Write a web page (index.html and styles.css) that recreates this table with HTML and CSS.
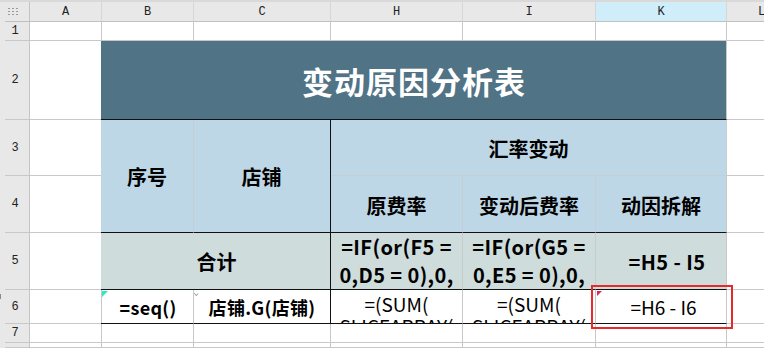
FILE: index.html
```html
<!DOCTYPE html>
<html lang="zh">
<head>
<meta charset="utf-8">
<title>变动原因分析表</title>
<link rel="stylesheet" href="styles.css">
</head>
<body>
<div class="sheet">
  <!-- top strip -->
  <div class="topstrip"></div>
  <div class="leftstrip"><span class="grip"></span></div>

  <!-- column headers -->
  <div class="corner"><span class="dots"></span></div>
  <div class="colh">A</div>
  <div class="colh">B</div>
  <div class="colh">C</div>
  <div class="colh">H</div>
  <div class="colh">I</div>
  <div class="colh sel">K</div>
  <div class="colh last">L</div>

  <!-- row 1 -->
  <div class="rowh">1</div>
  <div class="c"></div><div class="c"></div><div class="c"></div><div class="c"></div><div class="c"></div><div class="c"></div><div class="c"></div>

  <!-- row 2 -->
  <div class="rowh">2</div>
  <div class="c"></div>
  <div class="c title">变动原因分析表</div>
  <div class="c"></div>

  <!-- rows 3-4 -->
  <div class="rowh r3">3</div>
  <div class="rowh r4">4</div>
  <div class="c a34"></div>
  <div class="c hd seq">序号</div>
  <div class="c hd shop">店铺</div>
  <div class="c hd fx">汇率变动</div>
  <div class="c l34"></div>
  <div class="c hd sub r4c">原费率</div>
  <div class="c hd sub r4c">变动后费率</div>
  <div class="c hd sub last4 r4c">动因拆解</div>

  <!-- row 5 -->
  <div class="rowh">5</div>
  <div class="c"></div>
  <div class="c tot sum">合计</div>
  <div class="c tot wrap">=IF(or(F5 =<br>0,D5 = 0),0,</div>
  <div class="c tot wrap">=IF(or(G5 =<br>0,E5 = 0),0,</div>
  <div class="c tot k5">=H5 - I5</div>
  <div class="c"></div>

  <!-- row 6 -->
  <div class="rowh">6</div>
  <div class="c"></div>
  <div class="c d6 b6"><span class="tri cyan"></span>=seq()</div>
  <div class="c d6 c6"><span class="tick"></span>店铺.G(店铺)</div>
  <div class="c d6 f6 gl">=(SUM(<br>SLICEARRAY(</div>
  <div class="c d6 f6 gl">=(SUM(<br>SLICEARRAY(</div>
  <div class="c d6 k6"><span class="tri red"></span>=H6 - I6<span class="selbox"></span></div>
  <div class="c"></div>

  <!-- row 7 -->
  <div class="rowh">7</div>
  <div class="c"></div><div class="c"></div><div class="c"></div><div class="c"></div><div class="c"></div><div class="c"></div><div class="c"></div>

  <!-- row 8 -->
  <div class="rowh"></div>
  <div class="c"></div><div class="c"></div><div class="c"></div><div class="c"></div><div class="c"></div><div class="c"></div><div class="c"></div>
</div>
</body>
</html>
```

FILE: styles.css
```css
html, body {
  margin: 0;
  padding: 0;
  background: #ffffff;
}

body {
  width: 764px;
  height: 348px;
  overflow: hidden;
  font-family: "Noto Sans CJK SC", "Noto Sans", sans-serif;
  color: #000;
}

.sheet {
  display: grid;
  grid-template-columns: 5px 25px 72px 92px 137px 132px 133px 131px 1fr;
  grid-template-rows: 2px 20px 19px 79px 56px 57px 57px 34px 19px 1fr;
  height: 348px;
}

.topstrip {
  grid-column: 1 / -1;
  grid-row: 1;
  background: #d9d9d9;
}

.leftstrip {
  grid-column: 1;
  grid-row: 2 / -1;
  background: #e8e8e8;
  position: relative;
}

.grip {
  position: absolute;
  left: 0;
  top: 292px;
  width: 1px;
  height: 5px;
  background: #8a8a8a;
}

.corner {
  grid-column: 2;
  background: #e8e8e8;
  border-right: 1px solid #c4c4c4;
  border-bottom: 1px solid #c0c0c0;
  box-sizing: border-box;
  display: flex;
  align-items: center;
  justify-content: center;
  margin-left: -5px;
  padding-right: 4px;
}

.dots {
  width: 11px;
  height: 9px;
  background-image: radial-gradient(circle, #9a9a9a 0.9px, transparent 1.1px);
  background-size: 4px 3px;
  background-position: 0 0;
  margin-top: -1px;
}

.colh {
  background: #e8e8e8;
  border-right: 1px solid #d6d6d6;
  border-bottom: 1px solid #c0c0c0;
  box-sizing: border-box;
  font-family: "Liberation Mono", "DejaVu Sans Mono", monospace;
  font-size: 12px;
  color: #222;
  display: flex;
  align-items: center;
  justify-content: center;
  padding-top: 1px;
}

.colh.sel {
  background: #cfeef9;
}

.colh.last {
  justify-content: flex-start;
  padding-left: 31px;
}

.rowh {
  grid-column: 2;
  background: #e8e8e8;
  border-right: 1px solid #c4c4c4;
  border-bottom: 1px solid #c8c8c8;
  box-sizing: border-box;
  font-family: "Liberation Mono", "DejaVu Sans Mono", monospace;
  font-size: 12px;
  color: #222;
  display: flex;
  align-items: center;
  justify-content: center;
  padding-right: 4px;
}

.rowh.r3 { grid-row: 5; }
.rowh.r4 { grid-row: 6; }

.c {
  border-right: 1px solid #c8c8c8;
  border-bottom: 1px solid #c8c8c8;
  box-sizing: border-box;
  min-width: 0;
  overflow: hidden;
}

/* title */
.title {
  grid-column: 4 / 9;
  background: #507386;
  color: #ffffff;
  font-weight: 700;
  font-size: 31px;
  display: flex;
  align-items: center;
  justify-content: center;
  border-right: 1px solid #c8c8c8;
  border-bottom: 1px solid #111;
  margin-left: -1px;
  padding-left: 1px;
  padding-top: 1px;
  letter-spacing: 1px;
}

/* header rows 3-4 */
.a34 {
  grid-column: 3;
  grid-row: 5 / 7;
  background: linear-gradient(#ffffff 55px, #c8c8c8 55px, #c8c8c8 56px, #ffffff 56px);
}

.l34 {
  grid-column: 9;
  grid-row: 5 / 7;
  background: linear-gradient(#ffffff 55px, #c8c8c8 55px, #c8c8c8 56px, #ffffff 56px);
}

.hd {
  background: #bed7e6;
  font-weight: 700;
  font-size: 20px;
  display: flex;
  align-items: center;
  justify-content: center;
  border-right-color: #c6cdd3;
  border-bottom-color: #c6cdd3;
}

.seq {
  grid-column: 4;
  grid-row: 5 / 7;
  border-bottom: 1px solid #111;
  margin-left: -1px;
}

.shop {
  grid-column: 5;
  grid-row: 5 / 7;
  border-right: 1px solid #111;
  border-bottom: 1px solid #111;
  padding-right: 1px;
}

.fx {
  grid-column: 6 / 9;
  grid-row: 5;
  padding-top: 1px;
}

.r4c {
  grid-row: 6;
  border-bottom: 1px solid #111;
  padding-top: 2px;
}

.last4 { border-right-color: #c8c8c8; }

/* total row */
.tot {
  background: #cfdcdc;
  font-weight: 700;
  font-size: 20px;
  border-bottom: 1px solid #111;
}

.sum {
  grid-column: 4 / 6;
  border-right: 1px solid #111;
  display: flex;
  align-items: center;
  justify-content: center;
  margin-left: -1px;
  padding-left: 2px;
}

.wrap {
  text-align: center;
  line-height: 28px;
  white-space: nowrap;
  letter-spacing: 0.4px;
  border-right-color: #c6cdcd;
}

.k5 {
  display: flex;
  align-items: center;
  justify-content: center;
  padding-left: 12px;
  letter-spacing: 0.4px;
}

/* data row */
.d6 {
  border-bottom: 1px solid #111;
  position: relative;
  font-size: 19px;
}

.b6, .c6 {
  font-weight: 700;
  display: flex;
  align-items: center;
  justify-content: center;
  font-size: 18px;
  letter-spacing: 0.3px;
}

.b6 { margin-left: -1px; padding-left: 2px; }

.c6 {
  border-right: 1px solid #111;
}

.f6 {
  text-align: center;
  line-height: 22px;
  padding-top: 3px;
  white-space: nowrap;
}

.k6 {
  display: flex;
  align-items: center;
  justify-content: center;
  overflow: visible;
  padding-left: 5px;
}

.tri {
  position: absolute;
  left: 1px;
  top: 1px;
  width: 0;
  height: 0;
  border-style: solid;
}

.tri.cyan {
  border-width: 6px 6px 0 0;
  border-color: #2fe6c7 transparent transparent transparent;
}

.tri.red {
  border-width: 5px 5px 0 0;
  border-color: #e0235a transparent transparent transparent;
}

.tick {
  position: absolute;
  left: 0;
  top: 1px;
  width: 3px;
  height: 4px;
  border-left: 1px solid #9b8f86;
  border-bottom: 1px solid #9b8f86;
  transform: rotate(-45deg) scale(0.8);
}

.selbox {
  position: absolute;
  left: -5px;
  top: -5px;
  width: 142px;
  height: 44px;
  border: 2px solid #e42a2a;
  box-sizing: border-box;
  pointer-events: none;
  z-index: 2;
}
```
